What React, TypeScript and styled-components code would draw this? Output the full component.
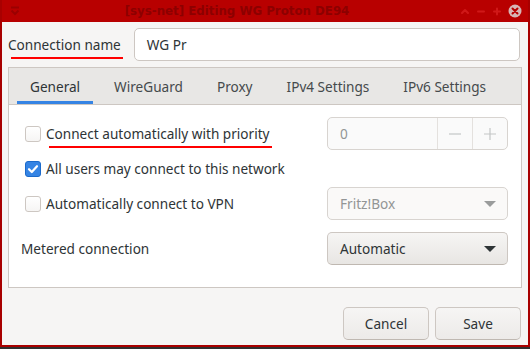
import { FC, ReactNode } from 'react';
import styled, { createGlobalStyle } from 'styled-components';

const GlobalStyle = createGlobalStyle`
  html, body {
    margin: 0;
    padding: 0;
    background: #2b2b2b;
  }
  #root {
    width: 530px;
    height: 349px;
    overflow: hidden;
  }
`;

const UI_FONT = `"Noto Sans", "DejaVu Sans", sans-serif`;
const TEXT_SIZE = '13.6px';

const Screen = styled.div`
  width: 530px;
  height: 349px;
  background: #303030;
  font-family: ${UI_FONT};
  color: #2e3436;
`;

const Window = styled.div`
  width: 526px;
  height: 345px;
  border: 2px solid #a80000;
  border-top: none;
  display: flex;
  flex-direction: column;
  background: #f6f5f4;
`;

const TitleBar = styled.div`
  height: 22px;
  flex: none;
  background: #b80000;
  display: flex;
  align-items: center;
  padding: 0 6px 0 8px;
  gap: 6px;
`;

const Title = styled.div`
  flex: 1;
  text-align: center;
  font-family: "DejaVu Sans", sans-serif;
  font-weight: bold;
  font-size: 11.8px;
  color: #8c0000;
  padding-right: 6px;
`;

const TitleIcons = styled.div`
  display: flex;
  align-items: center;
  gap: 6px;
`;

const Body = styled.div`
  flex: 1;
  display: flex;
  flex-direction: column;
  padding: 5px 6px 0 6px;
`;

const NameRow = styled.div`
  display: flex;
  align-items: center;
  height: 34px;
  gap: 13px;
  padding-right: 2px;
`;

const Marked = styled.span`
  position: relative;
  &::after {
    content: '';
    position: absolute;
    left: 3px;
    right: -2px;
    bottom: -5px;
    height: 2px;
    background: #ff0000;
  }
`;

const Label = styled.span`
  font-size: ${TEXT_SIZE};
  white-space: nowrap;
`;

const Entry = styled.div`
  flex: 1;
  height: 33px;
  box-sizing: border-box;
  background: #fff;
  border: 1px solid #cdc7c2;
  border-radius: 5px;
  display: flex;
  align-items: center;
  padding: 0 12px;
  font-size: ${TEXT_SIZE};
`;

const Notebook = styled.div`
  margin-top: 6px;
  height: 221px;
  box-sizing: border-box;
  border: 1px solid #cdc7c2;
  display: flex;
  flex-direction: column;
  background: #fff;
`;

const TabBar = styled.div`
  height: 36px;
  flex: none;
  background: #e8e7e5;
  border-bottom: 1px solid #cdc7c2;
  display: flex;
  gap: 8px;
  padding-left: 8px;
`;

const TabItem = styled.div<{ $active?: boolean }>`
  padding: 0 13px;
  display: flex;
  align-items: center;
  font-size: ${TEXT_SIZE};
  color: ${({ $active }) => ($active ? '#2e3436' : '#454a4c')};
  box-shadow: ${({ $active }) => ($active ? 'inset 0 -3px 0 #3584e4' : 'none')};
`;

const Page = styled.div`
  flex: 1;
  padding: 12px 13px 0 16px;
  display: flex;
  flex-direction: column;
`;

const Row = styled.div<{ $gap?: number }>`
  height: 33px;
  display: flex;
  align-items: center;
  justify-content: space-between;
  margin-top: ${({ $gap }) => $gap ?? 0}px;
`;

const CheckLine = styled.label`
  display: flex;
  align-items: center;
  gap: 5px;
  font-size: ${TEXT_SIZE};
`;

const Box = styled.span<{ $checked?: boolean }>`
  width: 14px;
  height: 14px;
  border-radius: 3px;
  border: 1px solid ${({ $checked }) => ($checked ? '#1b6acb' : '#cdc7c2')};
  background: ${({ $checked }) => ($checked ? '#3584e4' : 'linear-gradient(#ffffff, #f6f5f4)')};
  display: flex;
  align-items: center;
  justify-content: center;
`;

const MeteredLabel = styled.span`
  font-size: ${TEXT_SIZE};
  margin-left: -4px;
`;

const Spin = styled.div`
  width: 181px;
  height: 33px;
  box-sizing: border-box;
  border: 1px solid #d8d4d0;
  border-radius: 5px;
  background: #fafafa;
  display: flex;
  color: #929595;
  font-size: ${TEXT_SIZE};
`;

const SpinValue = styled.div`
  flex: 1;
  display: flex;
  align-items: center;
  padding-left: 12px;
`;

const SpinButton = styled.div`
  width: 34px;
  border-left: 1px solid #e4e1de;
  display: flex;
  align-items: center;
  justify-content: center;
`;

const Combo = styled.div<{ $disabled?: boolean }>`
  width: 181px;
  height: 33px;
  box-sizing: border-box;
  border: 1px solid ${({ $disabled }) => ($disabled ? '#d8d4d0' : '#cdc7c2')};
  border-bottom-color: ${({ $disabled }) => ($disabled ? '#d8d4d0' : '#bfb8b1')};
  border-radius: 5px;
  background: ${({ $disabled }) =>
    $disabled ? '#faf9f8' : 'linear-gradient(to top, #e8e6e3 0, #f6f5f4 100%)'};
  color: ${({ $disabled }) => ($disabled ? '#929595' : '#2e3436')};
  display: flex;
  align-items: center;
  justify-content: space-between;
  padding: 0 11px 0 12px;
  font-size: ${TEXT_SIZE};
`;

const Arrow = styled.span<{ $disabled?: boolean }>`
  width: 0;
  height: 0;
  border-left: 6px solid transparent;
  border-right: 6px solid transparent;
  border-top: 6px solid ${({ $disabled }) => ($disabled ? '#9a9c9c' : '#2e3436')};
`;

const Actions = styled.div`
  display: flex;
  justify-content: flex-end;
  gap: 6px;
  margin-top: 19px;
  padding-right: 1px;
`;

const Button = styled.button`
  width: 86px;
  height: 33px;
  border: 1px solid #cdc7c2;
  border-bottom-color: #bfb8b1;
  border-radius: 5px;
  background: linear-gradient(to top, #edebe9 2px, #f6f5f4);
  font-family: ${UI_FONT};
  font-size: ${TEXT_SIZE};
  color: #2e3436;
  padding: 0;
`;

const Check = () => (
  <svg width="12" height="12" viewBox="0 0 12 12">
    <path d="M2 6.2 L4.8 9 L10 3.2" fill="none" stroke="#fff" strokeWidth="2.2" strokeLinecap="round" strokeLinejoin="round" />
  </svg>
);

const CheckRow: FC<{ checked?: boolean; children: ReactNode }> = ({ checked, children }) => (
  <CheckLine>
    <Box $checked={checked}>{checked && <Check />}</Box>
    {children}
  </CheckLine>
);

const Glyph: FC<{ d: string; w?: number }> = ({ d, w = 10 }) => (
  <svg width={w} height="10" viewBox="0 0 10 10">
    <path d={d} fill="none" stroke="#d01818" strokeWidth="2" strokeLinecap="round" strokeLinejoin="round" />
  </svg>
);

export default function App() {
  return (
    <Screen>
      <GlobalStyle />
      <Window>
        <TitleBar>
          <svg width="10" height="10" viewBox="0 0 10 10">
            <path d="M1 1.5 H9 M1.5 4.5 L5 8 L8.5 4.5" fill="none" stroke="#9a0000" strokeWidth="2" />
          </svg>
          <Title>[sys-net] Editing WG Proton DE94</Title>
          <TitleIcons>
            <Glyph d="M2 7 L5 4 L8 7" />
            <Glyph d="M2 5.5 H8" />
            <Glyph d="M2 5.5 H8 M5 2.5 V8.5" />
            <svg width="14" height="14" viewBox="0 0 14 14">
              <circle cx="7" cy="7" r="6.5" fill="#d7b6b6" />
              <path d="M4.5 4.5 L9.5 9.5 M9.5 4.5 L4.5 9.5" stroke="#b80000" strokeWidth="2" strokeLinecap="round" />
            </svg>
          </TitleIcons>
        </TitleBar>
        <Body>
          <NameRow>
            <Label>
              <Marked>Connection name</Marked>
            </Label>
            <Entry>WG Pr</Entry>
          </NameRow>
          <Notebook>
            <TabBar>
              <TabItem $active>General</TabItem>
              <TabItem>WireGuard</TabItem>
              <TabItem>Proxy</TabItem>
              <TabItem>IPv4 Settings</TabItem>
              <TabItem>IPv6 Settings</TabItem>
            </TabBar>
            <Page>
              <Row>
                <CheckRow>
                  <Marked>Connect automatically with priority</Marked>
                </CheckRow>
                <Spin>
                  <SpinValue>0</SpinValue>
                  <SpinButton>
                    <svg width="14" height="14" viewBox="0 0 14 14">
                      <path d="M1 7 H13" stroke="#c4c6c6" strokeWidth="1.2" />
                    </svg>
                  </SpinButton>
                  <SpinButton>
                    <svg width="14" height="14" viewBox="0 0 14 14">
                      <path d="M1 7 H13 M7 1 V13" stroke="#c4c6c6" strokeWidth="1.2" />
                    </svg>
                  </SpinButton>
                </Spin>
              </Row>
              <Row $gap={2}>
                <CheckRow checked>All users may connect to this network</CheckRow>
              </Row>
              <Row $gap={2}>
                <CheckRow>Automatically connect to VPN</CheckRow>
                <Combo $disabled>
                  Fritz!Box
                  <Arrow $disabled />
                </Combo>
              </Row>
              <Row $gap={12}>
                <MeteredLabel>Metered connection</MeteredLabel>
                <Combo>
                  Automatic
                  <Arrow />
                </Combo>
              </Row>
            </Page>
          </Notebook>
          <Actions>
            <Button>Cancel</Button>
            <Button>Save</Button>
          </Actions>
        </Body>
      </Window>
    </Screen>
  );
}
